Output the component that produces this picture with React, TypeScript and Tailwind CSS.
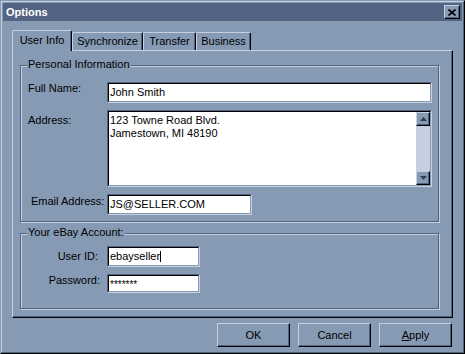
import React from "react";

function Sunken({ className, children, align }: { className: string; children?: React.ReactNode; align?: string }) {
  return (
    <div className={"border border-t-[#52617f] border-l-[#52617f] border-r-[#c6d0e0] border-b-[#c6d0e0] " + className}>
      <div className={"h-full w-full border border-t-black border-l-black border-r-[#869ab4] border-b-[#869ab4] bg-white flex pl-[1px] " + (align ?? "items-center")}>
        {children}
      </div>
    </div>
  );
}

function ScrollBtn({ down }: { down?: boolean }) {
  return (
    <div className="w-[14px] h-[14px] bg-[#869ab4] border border-t-[#c6d0e0] border-l-[#c6d0e0] border-r-black border-b-black shadow-[inset_-1px_-1px_0_#52617f] flex items-center justify-center">
      <svg width="7" height="4" viewBox="0 0 7 4" className={down ? "rotate-180" : ""}>
        <polygon points="3.5,0 7,4 0,4" fill="#333d52" />
      </svg>
    </div>
  );
}

function Button({ children }: { children: React.ReactNode }) {
  return (
    <div className="w-[73px] h-[24px] bg-[#869ab4] border border-t-[#c6d0e0] border-l-[#c6d0e0] border-r-black border-b-black shadow-[inset_-1px_-1px_0_#52617f] flex items-center justify-center">
      {children}
    </div>
  );
}

export default function App() {
  return (
    <div className="w-[465px] h-[354px] bg-[#869ab4] text-black text-[11px] leading-[13px] font-['Liberation_Sans',Arial,sans-serif]">
      <div className="h-full border border-t-[#869ab4] border-l-[#869ab4] border-r-black border-b-black">
        <div className="h-full border border-t-[#c6d0e0] border-l-[#c6d0e0] border-r-[#52617f] border-b-[#52617f] p-[1px] flex flex-col">
          {/* Title bar */}
          <div className="h-[18px] bg-[#536383] flex items-center justify-between pl-[3px] pr-[2px]">
            <span className="text-white font-bold text-[11px]">Options</span>
            <div className="w-[16px] h-[14px] bg-[#869ab4] border border-t-[#c6d0e0] border-l-[#c6d0e0] border-r-black border-b-black shadow-[inset_-1px_-1px_0_#52617f] flex items-center justify-center">
              <svg width="8" height="7" viewBox="0 0 8 7">
                <path d="M0.5 0.5 L7.5 6.5 M7.5 0.5 L0.5 6.5" stroke="black" strokeWidth="1.6" />
              </svg>
            </div>
          </div>

          <div className="px-[9px] pt-[9px]">
            {/* Tabs */}
            <div className="flex items-end h-[20px]">
              <div className="relative z-10 w-[60px] h-[21px] -mb-[1px] pb-[1px] bg-[#869ab4] border-l border-t border-r border-l-[#c6d0e0] border-t-[#c6d0e0] border-r-black shadow-[inset_-1px_0_0_#52617f] rounded-t-[2px] flex items-center justify-center">
                User Info
              </div>
              <div className="w-[71px] h-[18px] bg-[#869ab4] border-l border-t border-r border-l-[#c6d0e0] border-t-[#c6d0e0] border-r-black shadow-[inset_-1px_0_0_#52617f] rounded-t-[2px] flex items-center justify-center">
                Synchronize
              </div>
              <div className="w-[53px] h-[18px] bg-[#869ab4] border-l border-t border-r border-l-[#c6d0e0] border-t-[#c6d0e0] border-r-black shadow-[inset_-1px_0_0_#52617f] rounded-t-[2px] flex items-center justify-center">
                Transfer
              </div>
              <div className="w-[55px] h-[18px] bg-[#869ab4] border-l border-t border-r border-l-[#c6d0e0] border-t-[#c6d0e0] border-r-black shadow-[inset_-1px_0_0_#52617f] rounded-t-[2px] flex items-center justify-center">
                Business
              </div>
            </div>

            {/* Panel */}
            <div className="h-[268px] border border-t-[#c6d0e0] border-l-[#c6d0e0] border-r-black border-b-black shadow-[inset_-1px_-1px_0_#52617f] pl-[7px] pt-[14px]">
              {/* Personal Information */}
              <div className="relative w-[419px] h-[157px] border border-[#52617f] shadow-[inset_1px_1px_0_#c6d0e0,1px_1px_0_#c6d0e0] pl-[7px] pt-[16px]">
                <span className="absolute -top-[8px] left-[6px] px-[1px] bg-[#869ab4]">Personal Information</span>
                <div className="grid grid-cols-[79px_325px] gap-y-[7px]">
                  <div>Full Name:</div>
                  <Sunken className="h-[21px]">John Smith</Sunken>
                  <div className="pt-[4px]">Address:</div>
                  <Sunken className="h-[77px]" align="items-stretch">
                    <div className="flex-1 pt-[2px]">
                      <div>123 Towne Road Blvd.</div>
                      <div>Jamestown, MI 48190</div>
                    </div>
                    <div className="w-[14px] flex flex-col bg-[#c6cfe0]">
                      <ScrollBtn />
                      <div className="flex-1" />
                      <ScrollBtn down />
                    </div>
                  </Sunken>
                  <div className="whitespace-nowrap pl-[3px] pt-[1px]">Email Address:</div>
                  <Sunken className="w-[145px] h-[21px]">JS@SELLER.COM</Sunken>
                </div>
              </div>

              {/* eBay Account */}
              <div className="relative mt-[11px] w-[419px] h-[76px] border border-[#52617f] shadow-[inset_1px_1px_0_#c6d0e0,1px_1px_0_#c6d0e0] pl-[7px] pt-[12px]">
                <span className="absolute -top-[8px] left-[6px] px-[1px] bg-[#869ab4]">Your eBay Account:</span>
                <div className="grid grid-cols-[79px_93px] gap-y-[7px]">
                  <div className="text-right pr-[9px] pt-[4px]">User ID:</div>
                  <Sunken className="h-[21px]">
                    <span>ebayseller</span>
                    <span className="w-[1px] h-[11px] bg-black" />
                  </Sunken>
                  <div className="text-right pr-[7px]">Password:</div>
                  <Sunken className="h-[19px]" align="items-start">
                    <span className="pt-[2px] text-[10px]">*******</span>
                  </Sunken>
                </div>
              </div>
            </div>

            {/* Buttons */}
            <div className="mt-[5px] flex justify-end gap-[8px] pr-[1px]">
              <Button>OK</Button>
              <Button>Cancel</Button>
              <Button>
                <span>
                  <span className="underline">A</span>pply
                </span>
              </Button>
            </div>
          </div>
        </div>
      </div>
    </div>
  );
}
